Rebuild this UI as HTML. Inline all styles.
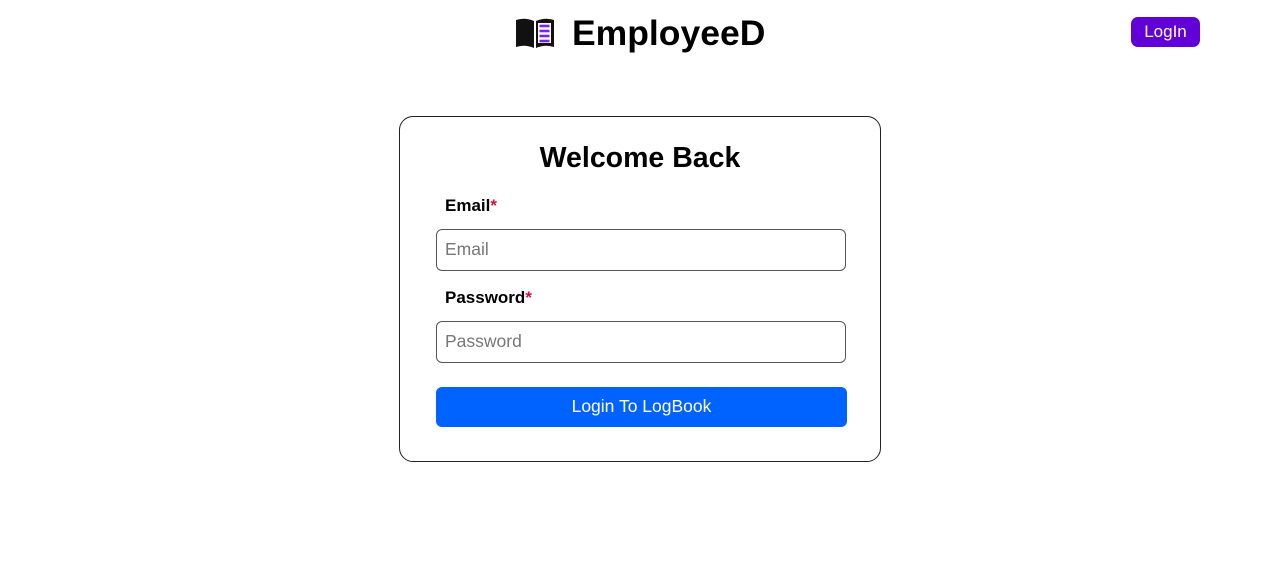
<!DOCTYPE html>
<html><head><style>
body{margin:0;width:1280px;height:576px;background:#fff;font-family:"Liberation Sans",sans-serif;position:relative;overflow:hidden}
.logo{position:absolute;left:515px;top:16px}
.brand{position:absolute;left:572px;top:12px;font-size:35.5px;font-weight:bold;color:#000;line-height:42px}
.login{position:absolute;left:1131px;top:17px;width:69px;height:30px;background:#6200d8;color:#fff;border-radius:7px;font-size:17px;line-height:30px;text-align:center}
.card{position:absolute;left:399px;top:116px;width:480px;height:344px;border:1px solid #222;border-radius:14px}
.title{position:absolute;left:0;width:480px;top:25px;text-align:center;font-size:28.5px;font-weight:bold}
.lbl{position:absolute;left:45px;font-size:17px;font-weight:bold}
.lbl span{color:#d0103a}
.inp{position:absolute;left:36px;width:410px;height:42px;border:1px solid #555;border-radius:6px;box-sizing:border-box;font-size:17.5px;color:#777;padding-left:8px;line-height:39px}
.btn{position:absolute;left:36px;top:270px;width:411px;height:40px;background:#0062ff;border-radius:6px;color:#fff;font-size:17.5px;text-align:center;line-height:39px}
</style></head><body>
<svg class="logo" width="40" height="34" viewBox="0 0 40 34">
<path d="M1 4 Q10 1 19 5 L19 32 Q10 28 1 31 Z" fill="#111"/>
<path d="M21 5 Q30 1 39 4 L39 31 Q30 28 21 32 Z" fill="#111"/>
<rect x="23" y="7" width="13" height="20" fill="#fff"/>
<g stroke="#7a22e8" stroke-width="2.6"><line x1="24.5" y1="10" x2="34.5" y2="10"/><line x1="24.5" y1="15" x2="34.5" y2="15"/><line x1="24.5" y1="20" x2="34.5" y2="20"/><line x1="24.5" y1="25" x2="34.5" y2="25"/></g>
</svg>
<div class="brand">EmployeeD</div>
<div class="login">LogIn</div>
<div class="card">
<div class="title">Welcome Back</div>
<div class="lbl" style="top:79px">Email<span>*</span></div>
<div class="inp" style="top:112px">Email</div>
<div class="lbl" style="top:171px">Password<span>*</span></div>
<div class="inp" style="top:204px">Password</div>
<div class="btn">Login To LogBook</div>
</div>
</body></html>
